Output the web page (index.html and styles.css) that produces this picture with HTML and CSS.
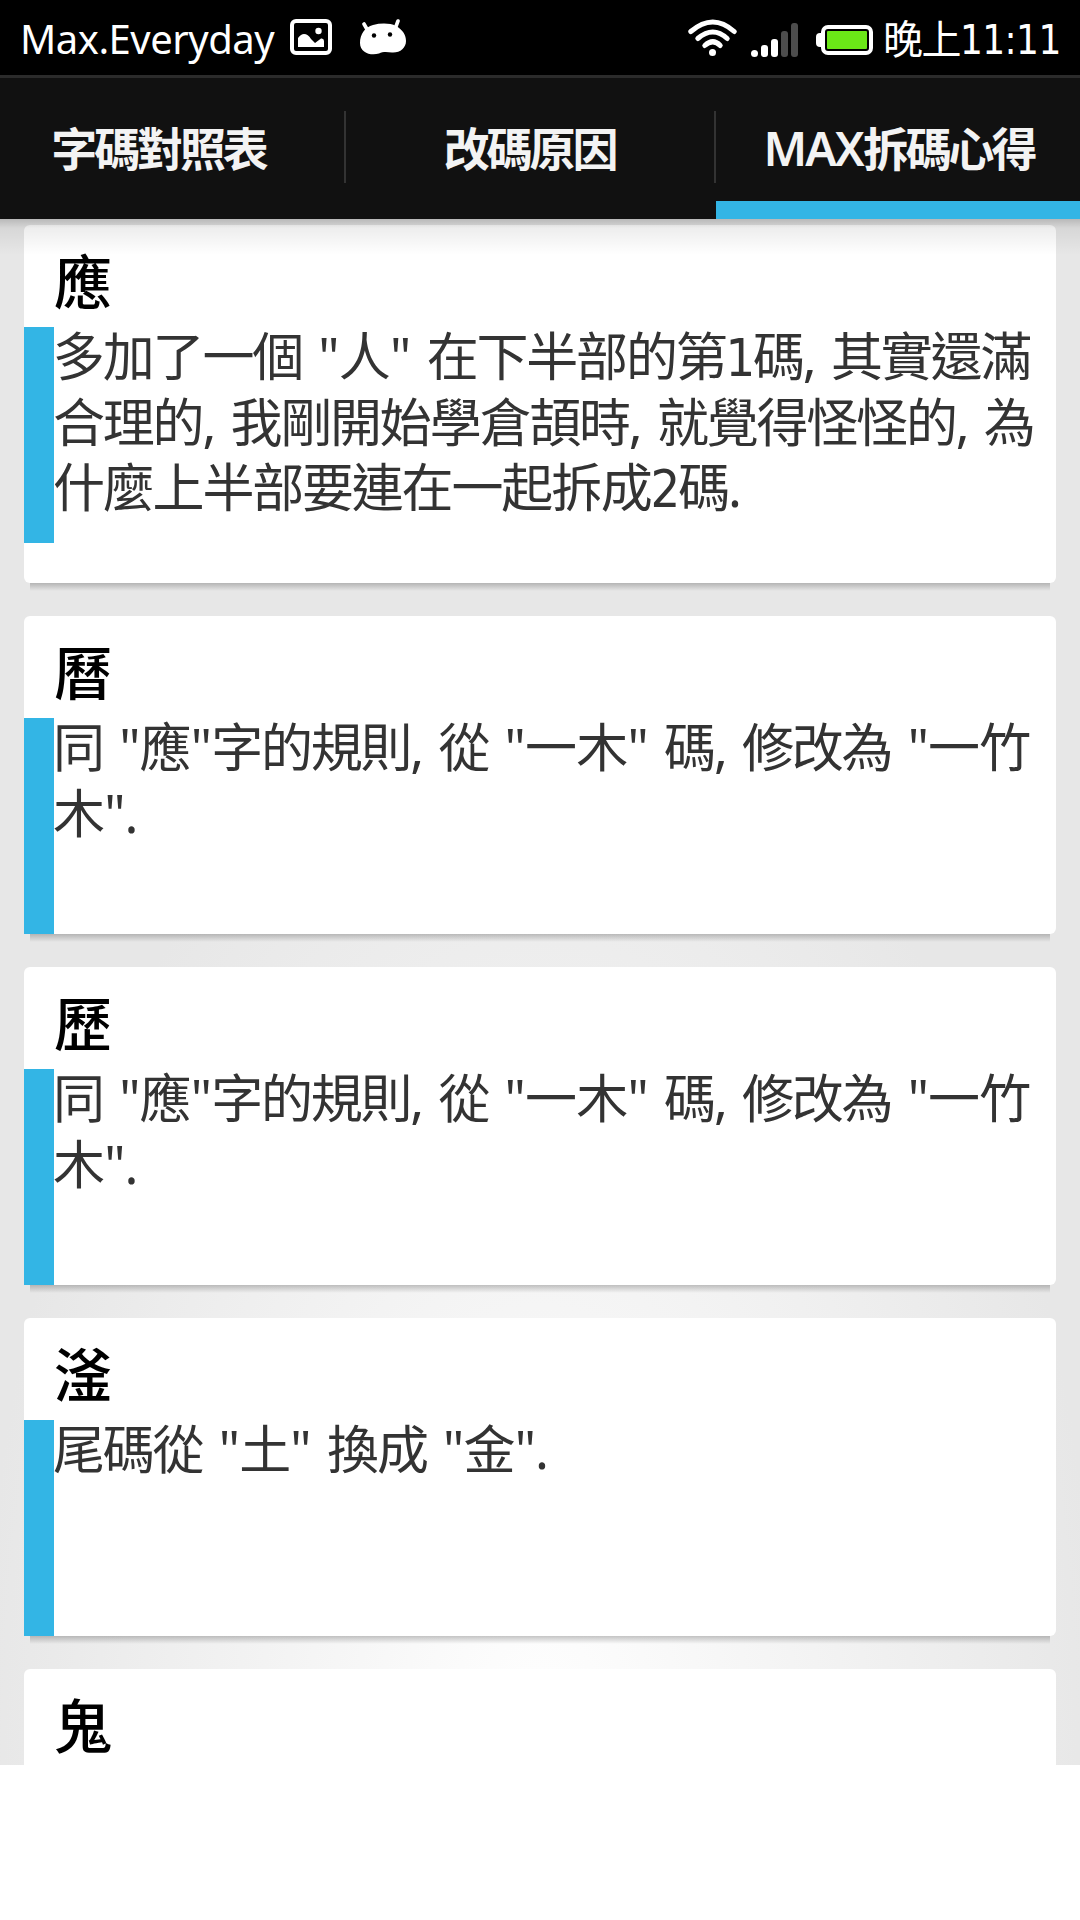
FILE: index.html
```html
<!DOCTYPE html>
<html lang="zh-Hant">
<head>
  <meta charset="UTF-8" /><meta name="viewport" content="width=device-width, initial-scale=1.0"/>
  <title>MAX拆碼心得</title>
  <link rel="stylesheet" href="styles.css">
</head>
<body>
  <div class="status-bar">
    <span class="carrier">Max.Everyday</span>
    <svg class="icon-picture" width="42" height="36" viewBox="0 0 42 36">
      <rect x="2" y="2" width="38" height="32" rx="4" fill="none" stroke="#fff" stroke-width="4"/>
      <circle cx="28.500" cy="12" r="3.200" fill="#fff"/>
      <path d="M8 28V19Q11 15 14 15Q18 15 21 20L25 24L31 19.500Q34 19 34 22V28Z" fill="#fff"/>
    </svg>
    <svg class="icon-android" width="48" height="36" viewBox="0 0 48 36">
      <path d="M5 5L9 12M39 2L36 10" stroke="#fff" stroke-width="3.600" stroke-linecap="round"/>
      <path d="M1 24C1 15 6 8 14 6C22 4 31 4 37 7C44 11 47 16 47 22C47 29 41 34 33 33.500C28 33 24 32.500 20 34.500C12 37 1 34 1 24Z" fill="#fff"/>
      <circle cx="15" cy="16.500" r="2.200" fill="#000"/>
      <circle cx="31" cy="15.500" r="2.200" fill="#000"/>
    </svg>
    <span class="spacer"></span>
    <svg class="icon-wifi" width="50" height="38" viewBox="0 0 50 38">
      <g fill="none" stroke="#fff" stroke-width="5" stroke-linecap="round">
        <path d="M2.800 12.500Q25 -6.500 46.200 12.500"/>
        <path d="M9.800 19.500Q25 6.500 39.200 19.500"/>
        <path d="M16.800 26.500Q25 19 32.200 26.500"/>
      </g>
      <circle cx="24.500" cy="33.500" r="3.500" fill="#fff"/>
    </svg>
    <svg class="icon-signal" width="48" height="36" viewBox="0 0 48 36">
      <g fill="#fff">
        <rect x="0" y="28" width="7" height="7" rx="3.500"/>
        <rect x="10" y="23" width="7" height="12" rx="3"/>
        <rect x="20" y="17" width="7" height="18" rx="3"/>
      </g>
      <g fill="#4d4d4d">
        <rect x="30" y="9" width="7" height="26" rx="3"/>
        <rect x="40" y="1" width="7" height="34" rx="3"/>
      </g>
    </svg>
    <svg class="icon-battery" width="58" height="30" viewBox="0 0 58 30">
      <rect x="0" y="8" width="10" height="14" rx="4" fill="#fff"/>
      <rect x="7" y="2" width="48" height="26" rx="5" fill="#000" stroke="#fff" stroke-width="4"/>
      <rect x="11" y="6" width="40" height="18" rx="1" fill="#6be817"/>
    </svg>
    <span class="clock">晚上<span class="num">11:11</span></span>
  </div>

  <nav class="tabs">
    <a class="tab tab-first">字碼對照表</a>
    <a class="tab">改碼原因</a>
    <a class="tab active"><span class="latin">MAX</span>拆碼心得</a>
  </nav>

  <main class="list">
    <div class="card card-tall">
      <h2>應</h2>
      <div class="note">
        <p>多加了一個 <span class="quote">"人"</span> 在下半部的第<span class="num">1</span>碼, 其實還滿<br>合理的, 我剛開始學倉頡時, 就覺得怪怪的, 為<br>什麼上半部要連在一起拆成<span class="num">2</span>碼.</p>
      </div>
    </div>
    <div class="card">
      <h2>曆</h2>
      <div class="note">
        <p>同 <span class="quote">"應"</span>字的規則, 從 <span class="quote">"一木"</span> 碼, 修改為 <span class="quote">"一竹<br>木".</span></p>
      </div>
    </div>
    <div class="card">
      <h2>歷</h2>
      <div class="note">
        <p>同 <span class="quote">"應"</span>字的規則, 從 <span class="quote">"一木"</span> 碼, 修改為 <span class="quote">"一竹<br>木".</span></p>
      </div>
    </div>
    <div class="card">
      <h2>滏</h2>
      <div class="note">
        <p>尾碼從 <span class="quote">"土"</span> 換成 <span class="quote">"金".</span></p>
      </div>
    </div>
    <div class="card">
      <h2>鬼</h2>
      <div class="note"></div>
    </div>
  </main>
</body>
</html>
```
FILE: styles.css
```css
* { box-sizing: border-box; margin: 0; padding: 0; }

body {
  background: #fff;
  color: #333;
  font-family: 'Noto Sans', 'Noto Sans CJK TC', sans-serif;
  width: 1080px;
  height: 1920px;
  overflow: hidden;
}

svg { display: block; flex: none; }

/* status bar */
.status-bar {
  display: flex;
  align-items: flex-start;
  height: 78px;
  padding: 0 20px;
  background: #000;
  border-bottom: 3px solid #2b2b2b;
  color: #fff;
  white-space: nowrap;
}

.carrier {
  width: 270px;
  font-size: 40px;
  line-height: 77px;
  letter-spacing: -0.5px;
}

.spacer { flex: 1; }
.icon-picture { margin-top: 19px; }
.icon-android { margin: 19px 0 0 27px; }
.icon-wifi { margin: 19px 13px 0 0; }
.icon-signal { margin: 22px 17px 0 0; }
.icon-battery { margin: 25px 9px 0 0; }

.clock {
  width: 177px;
  font-size: 40px;
  line-height: 78px;
  letter-spacing: -1.5px;
}

.num {
  font-family: 'DejaVu Sans Condensed', 'DejaVu Sans', sans-serif;
  font-stretch: condensed;
  line-height: 0;
}

.clock .num { letter-spacing: -0.6px; }

/* tabs */
.tabs {
  display: flex;
  position: relative;
  height: 141px;
  background: #111;
}

.tabs::after {
  content: "";
  position: absolute;
  z-index: 2;
  left: 0;
  top: 100%;
  width: 100%;
  height: 36px;
  background: linear-gradient(rgba(0,0,0,0.2), rgba(0,0,0,0.07) 25%, rgba(0,0,0,0));
}

.tab {
  display: flex;
  position: relative;
  justify-content: center;
  width: 370px;
  padding-right: 3px;
  color: #f3f3f3;
  font-size: 46px;
  font-weight: 700;
  line-height: 140px;
  letter-spacing: -3.1px;
  white-space: nowrap;
}

.tab-first {
  width: 346px;
  padding-right: 29px;
}

.tab.active {
  width: 364px;
  padding: 0 0 0 2px;
  border-bottom: 18px solid #33b5e5;
}

.tab + .tab::before {
  content: "";
  position: absolute;
  left: -2px;
  top: 33px;
  width: 2px;
  height: 72px;
  background: #333;
}

.latin {
  font-size: 47px;
  font-weight: 600;
  letter-spacing: -2px;
}

/* cards */
.list {
  display: flex;
  flex-direction: column;
  gap: 33px;
  height: 1546px;
  padding: 6px 24px 0;
  overflow: hidden;
  background: radial-gradient(ellipse 560px 1100px at 50% 100%, #fff, #e7e7e7);
}

.card {
  position: relative;
  flex: none;
  height: 318px;
  background: #fff;
  border-radius: 6px;
}

.card-tall { height: 358px; }

.card::after {
  content: "";
  position: absolute;
  left: 6px;
  right: 6px;
  top: 100%;
  height: 8px;
  background: linear-gradient(rgba(0,0,0,0.22), rgba(0,0,0,0));
}

.card h2 {
  height: 102px;
  padding-left: 30px;
  color: #000;
  font-size: 58px;
  font-weight: 500;
  line-height: 113px;
}

.note {
  display: flow-root;
  height: 216px;
  border-left: 30px solid #33b5e5;
}

.note p {
  margin: -4px 0 0 -1px;
  font-size: 52px;
  line-height: 65.6px;
  letter-spacing: -2.2px;
  word-spacing: 5px;
  white-space: nowrap;
}

.quote { letter-spacing: -0.8px; }
```
